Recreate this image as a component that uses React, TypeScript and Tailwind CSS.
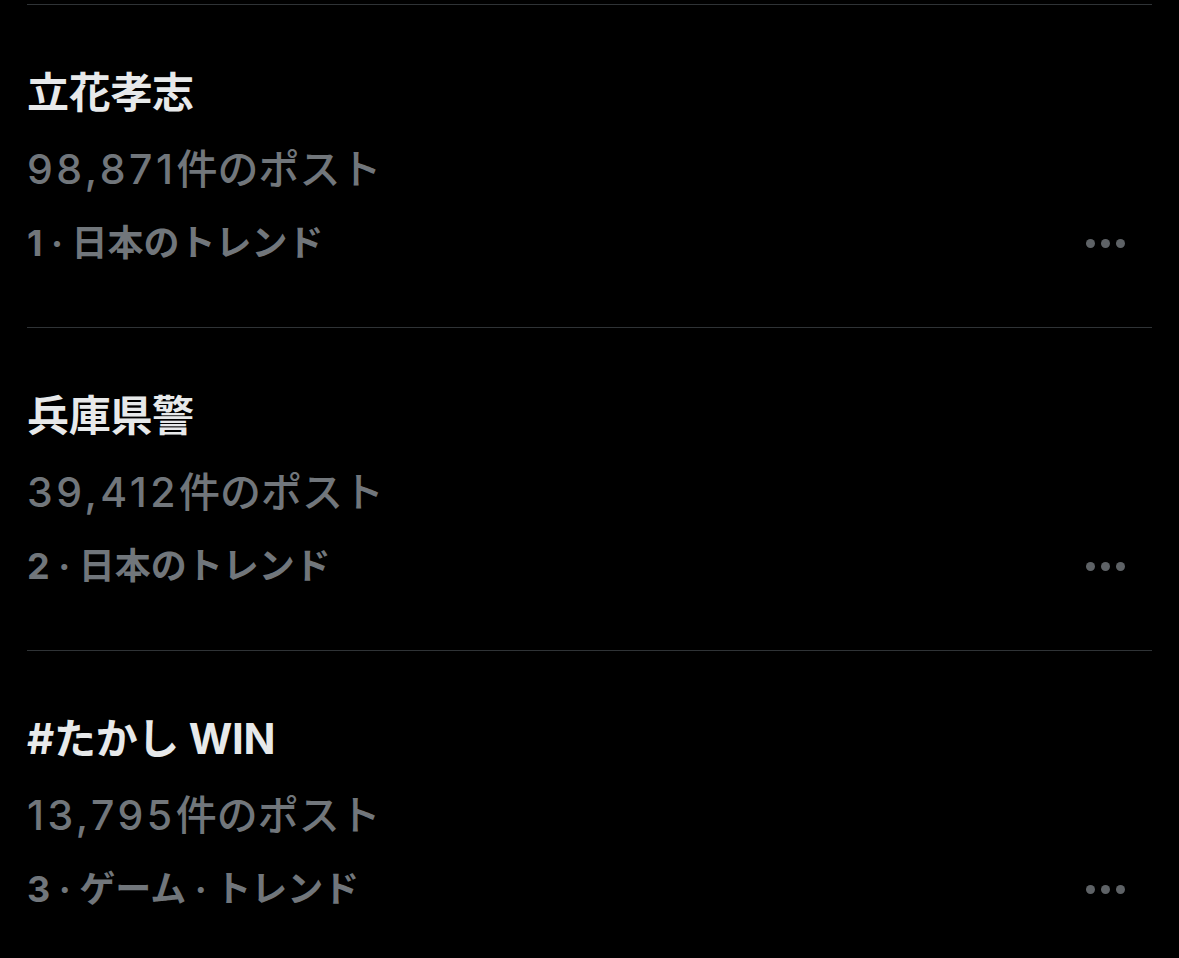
const trends = [
  { title: '立花孝志', num: '98,871', meta: '1 · 日本のトレンド' },
  { title: '兵庫県警', num: '39,412', meta: '2 · 日本のトレンド' },
  { title: '#たかし WIN', num: '13,795', meta: '3 · ゲーム · トレンド' },
];

function MoreDots() {
  return (
    <div className="flex items-center gap-[6px] pr-[27px]">
      <span className="w-[9px] h-[9px] rounded-full bg-[#5e6266]" />
      <span className="w-[9px] h-[9px] rounded-full bg-[#5e6266]" />
      <span className="w-[9px] h-[9px] rounded-full bg-[#5e6266]" />
    </div>
  );
}

export default function App() {
  return (
    <div
      className="min-h-[958px] w-full bg-black pt-[4px] px-[27px]"
      style={{ fontFamily: 'Inter, "Noto Sans CJK JP", sans-serif' }}
    >
      {trends.map((t) => (
        <div key={t.title} className="border-t border-[#2f3336] pt-[59px] pb-[59px]">
          <div className="h-[56px] flex items-center text-[42px] font-bold text-[#e7e9ea] tracking-[-0.3px]">
            {t.title}
          </div>
          <div className="mt-[22px] h-[56px] flex items-center text-[41px] font-medium text-[#71767b]">
            <span className="tracking-[3.5px]">{t.num}</span>
            <span>件のポスト</span>
          </div>
          <div className="mt-[20px] h-[50px] flex items-center justify-between">
            <span className="text-[36px] font-bold text-[#71767b]">{t.meta}</span>
            <MoreDots />
          </div>
        </div>
      ))}
    </div>
  );
}
